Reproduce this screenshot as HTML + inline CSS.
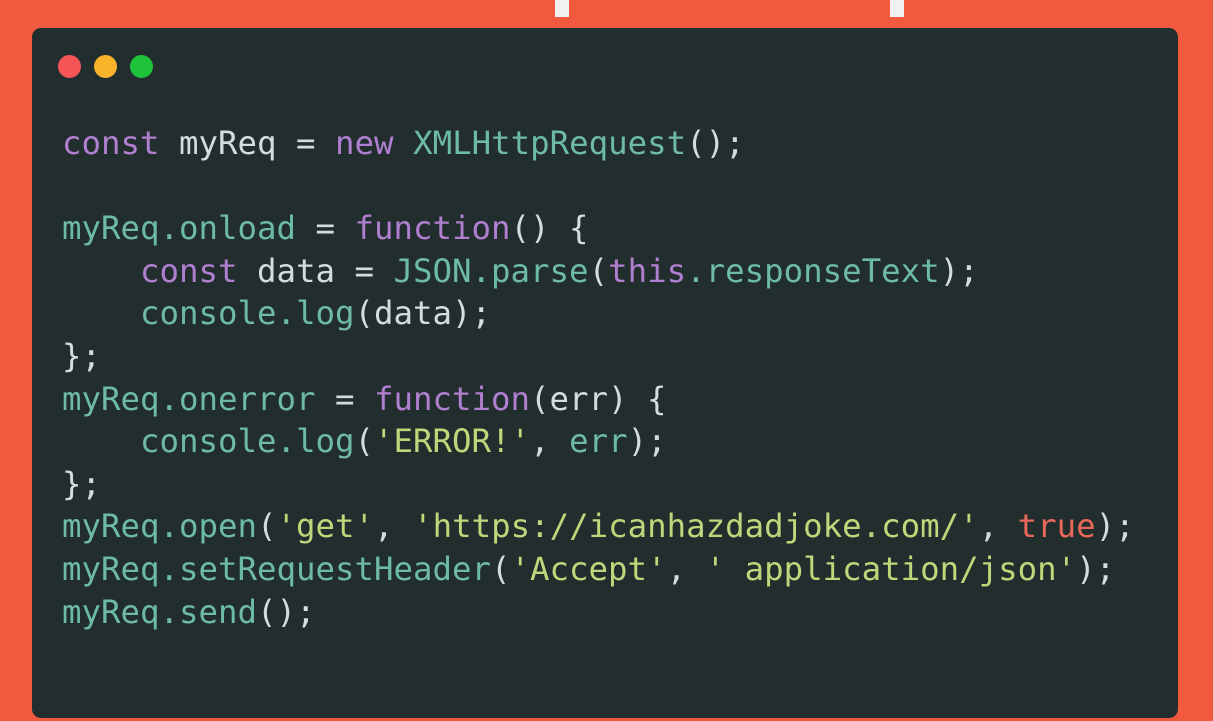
<!DOCTYPE html>
<html><head><meta charset="utf-8"><style>
html,body{margin:0;padding:0;width:1213px;height:721px;overflow:hidden;background:#f15a3f;}
.tab{position:absolute;top:0;width:14px;height:17px;background:#f1f1f1;}
.panel{position:absolute;left:32px;top:28px;width:1146px;height:690px;background:#222d2e;border-radius:9px;}
.dot{position:absolute;top:55px;width:23px;height:23px;border-radius:50%;}
pre{position:absolute;left:62px;top:122px;margin:0;font-family:"DejaVu Sans Mono","Liberation Mono",monospace;font-size:32.4px;line-height:42.6px;color:#d6dcdc;}
.k{color:#b07fd0}.t{color:#6dbba3}.s{color:#bfd67a}.b{color:#e8685a}
</style></head><body>
<div class="tab" style="left:555px"></div><div class="tab" style="left:890px"></div>
<div class="panel"></div>
<div class="dot" style="left:58px;background:#f55655"></div>
<div class="dot" style="left:94px;background:#f9b42c"></div>
<div class="dot" style="left:130px;background:#1fc23b"></div>
<pre><span class="k">const</span> myReq = <span class="k">new</span> <span class="t">XMLHttpRequest</span>();

<span class="t">myReq.onload</span> = <span class="k">function</span>() {
    <span class="k">const</span> data = <span class="t">JSON.parse</span>(<span class="k">this</span><span class="t">.responseText</span>);
    <span class="t">console.log</span>(data);
};
<span class="t">myReq.onerror</span> = <span class="k">function</span>(err) {
    <span class="t">console.log</span>(<span class="s">'ERROR!'</span>, <span class="t">err</span>);
};
<span class="t">myReq.open</span>(<span class="s">'get'</span>, <span class="s">'https://icanhazdadjoke.com/'</span>, <span class="b">true</span>);
<span class="t">myReq.setRequestHeader</span>(<span class="s">'Accept'</span>, <span class="s">' application/json'</span>);
<span class="t">myReq.send</span>();</pre>
</body></html>
